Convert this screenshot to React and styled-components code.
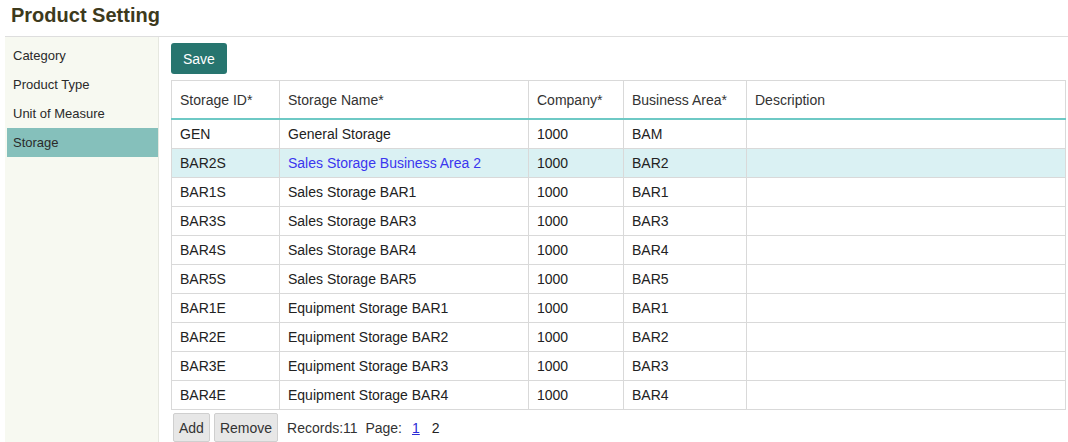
import React from 'react';
import styled, { createGlobalStyle } from 'styled-components';

const GlobalStyle = createGlobalStyle`
  html, body {
    margin: 0;
    padding: 0;
    background: #fff;
    font-family: "Liberation Sans", Arial, sans-serif;
    font-size: 14px;
    color: #222;
  }
`;

const menu = ['Category', 'Product Type', 'Unit of Measure', 'Storage'];

const columns = [
  { label: 'Storage ID*', width: 108 },
  { label: 'Storage Name*', width: 249 },
  { label: 'Company*', width: 95 },
  { label: 'Business Area*', width: 123 },
  { label: 'Description' },
];

const rows = [
  ['GEN', 'General Storage', '1000', 'BAM'],
  ['BAR2S', 'Sales Storage Business Area 2', '1000', 'BAR2'],
  ['BAR1S', 'Sales Storage BAR1', '1000', 'BAR1'],
  ['BAR3S', 'Sales Storage BAR3', '1000', 'BAR3'],
  ['BAR4S', 'Sales Storage BAR4', '1000', 'BAR4'],
  ['BAR5S', 'Sales Storage BAR5', '1000', 'BAR5'],
  ['BAR1E', 'Equipment Storage BAR1', '1000', 'BAR1'],
  ['BAR2E', 'Equipment Storage BAR2', '1000', 'BAR2'],
  ['BAR3E', 'Equipment Storage BAR3', '1000', 'BAR3'],
  ['BAR4E', 'Equipment Storage BAR4', '1000', 'BAR4'],
];

export default function App() {
  return (
    <>
      <GlobalStyle />
      <Page>
        <Header>
          <Title>Product Setting</Title>
        </Header>
        <Body>
          <Sidebar>
            {menu.map((m) => (
              <MenuItem key={m} $active={m === 'Storage'}>{m}</MenuItem>
            ))}
          </Sidebar>
          <Main>
            <SaveButton>Save</SaveButton>
            <Table>
              <colgroup>
                {columns.map((c) => (
                  <col key={c.label} style={c.width ? { width: c.width } : undefined} />
                ))}
              </colgroup>
              <thead>
                <tr>
                  {columns.map((c) => (
                    <Th key={c.label}>{c.label}</Th>
                  ))}
                </tr>
              </thead>
              <tbody>
                {rows.map((r, i) => (
                  <Tr key={r[0]} $selected={i === 1}>
                    <Td>{r[0]}</Td>
                    <Td $link={i === 1}>{r[1]}</Td>
                    <Td>{r[2]}</Td>
                    <Td>{r[3]}</Td>
                    <Td />
                  </Tr>
                ))}
              </tbody>
            </Table>
            <Footer>
              <GrayButton>Add</GrayButton>
              <GrayButton>Remove</GrayButton>
              <Info>
                Records:11&nbsp;&nbsp;Page:
                <PageLink $current>1</PageLink>
                <PageLink>2</PageLink>
              </Info>
            </Footer>
          </Main>
        </Body>
      </Page>
    </>
  );
}

const Page = styled.div`
  display: flex;
  flex-direction: column;
  height: 442px;
  overflow: hidden;
`;

const Header = styled.div`
  margin-left: 5px;
  height: 37px;
  box-sizing: border-box;
  padding: 4px 6px 0;
  border-bottom: 1px solid #dedede;
`;

const Title = styled.h1`
  margin: 0;
  font-size: 20px;
  line-height: 23px;
  font-weight: bold;
  color: #3d3a1c;
`;

const Body = styled.div`
  display: flex;
  flex: 1;
  margin-left: 5px;
`;

const Sidebar = styled.div`
  width: 154px;
  box-sizing: border-box;
  padding: 4px 0 0 2px;
  background: #f7f9f1;
  border-right: 1px solid #e6e8e0;
  display: flex;
  flex-direction: column;
`;

const MenuItem = styled.div`
  height: 29px;
  line-height: 29px;
  padding-left: 6px;
  font-size: 13px;
  color: #2a2a2a;
  background: ${(p) => (p.$active ? '#85c0bb' : 'transparent')};
`;

const Main = styled.div`
  flex: 1;
  padding: 6px 2px 0 12px;
  display: flex;
  flex-direction: column;
  align-items: flex-start;
`;

const SaveButton = styled.button`
  height: 31px;
  padding: 0 12px;
  border: none;
  border-radius: 3px;
  background: #27756f;
  color: #fff;
  font-family: inherit;
  font-size: 14px;
  cursor: pointer;
`;

const Table = styled.table`
  margin-top: 6px;
  width: 895px;
  border-collapse: collapse;
  table-layout: fixed;
  border: 1px solid #d9d9d9;
`;

const Th = styled.th`
  height: 37px;
  padding: 0 8px;
  text-align: left;
  font-weight: normal;
  color: #333;
  border-left: 1px solid #d9d9d9;
  border-bottom: 2px solid #6ec9c5;
  vertical-align: middle;
`;

const Tr = styled.tr`
  background: ${(p) => (p.$selected ? '#daf1f3' : '#fff')};
`;

const Td = styled.td`
  height: 28px;
  padding: 0 8px;
  border: 1px solid #d9d9d9;
  color: ${(p) => (p.$link ? '#3a36ef' : '#222')};
  white-space: nowrap;
  overflow: hidden;
`;

const Footer = styled.div`
  display: flex;
  align-items: center;
  gap: 4px;
  margin: 3px 0 0 2px;
`;

const GrayButton = styled.button`
  height: 29px;
  padding: 0 5px;
  border: 1px solid #cfcfcf;
  border-radius: 2px;
  background: #e7e7e7;
  color: #333;
  font-family: inherit;
  font-size: 14px;
`;

const Info = styled.span`
  margin-left: 5px;
  color: #333;
`;

const PageLink = styled.span`
  margin-left: ${(p) => (p.$current ? '10px' : '12px')};
  color: ${(p) => (p.$current ? '#2b2bd6' : '#222')};
  text-decoration: ${(p) => (p.$current ? 'underline' : 'none')};
`;
